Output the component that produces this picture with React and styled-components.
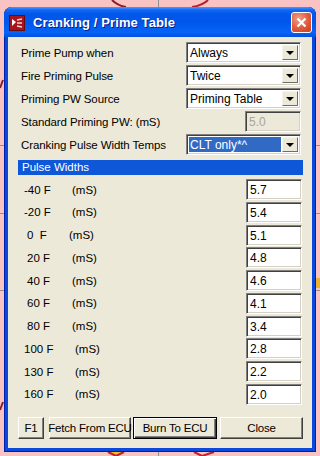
import React from 'react';
import styled, { createGlobalStyle } from 'styled-components';

const GlobalStyle = createGlobalStyle`
  html, body {
    margin: 0;
    padding: 0;
    background: #f9c3c3;
  }
  body {
    font-family: "Liberation Sans", Arial, sans-serif;
  }
`;

const Page = styled.div`
  position: relative;
  width: 320px;
  height: 456px;
  overflow: hidden;
  background: #f9c3c3;
`;

const Backdrop = styled.svg`
  position: absolute;
  left: 0;
  top: 0;
`;

const Window = styled.div`
  position: relative;
  margin: 7px 0 0 4px;
  width: 312px;
  padding-bottom: 4px;
  background: #0b48dc;
  border-radius: 8px 8px 0 0;
  box-shadow: inset 1px 0 #0020a8, inset -1px 0 #0020a8, inset 0 -1px #0020a8;
`;

const TitleBar = styled.div`
  height: 30px;
  display: flex;
  align-items: center;
  padding: 0 5px 0 5px;
  border-radius: 8px 8px 0 0;
  background: linear-gradient(#4b98ff 0, #1366f2 3px, #0058ea 7px, #0056ec 50%, #0663f6 85%, #0350e0 100%);
`;

const TitleIcon = styled.svg`
  flex: none;
  margin-top: 1px;
`;

const Title = styled.span`
  flex: 1;
  margin-left: 8px;
  color: #fff;
  font-weight: bold;
  font-size: 13px;
  letter-spacing: 0.1px;
  text-shadow: 1px 1px #0a1e8a;
`;

const CloseButton = styled.div`
  width: 19px;
  height: 19px;
  margin-right: -1px;
  margin-top: 1px;
  border: 1px solid #fff;
  border-radius: 3px;
  display: flex;
  align-items: center;
  justify-content: center;
  background: radial-gradient(circle at 35% 30%, #f0a088, #e2593a 55%, #c8401c);
`;

const Client = styled.div`
  margin: 0 4px;
  height: 411px;
  box-sizing: border-box;
  padding: 5px 9px 0 10px;
  background: #ece9d8;
  display: flex;
  flex-direction: column;
`;

const Settings = styled.div`
  display: flex;
  flex-direction: column;
  gap: 2px;
`;

const Row = styled.div`
  height: 21px;
  display: flex;
  align-items: center;
  justify-content: space-between;
`;

const Label = styled.span`
  padding-left: 3px;
  font-size: 11.5px;
  color: #000;
  letter-spacing: -0.1px;
`;

const Sunken = styled.div`
  box-sizing: border-box;
  height: ${p => p.$h || 21}px;
  border: 1px solid;
  border-color: #808080 #fff #fff #808080;
  box-shadow: inset 1px 1px #404040, inset -1px -1px #d4d0c8;
`;

const SelectBox = styled(Sunken)`
  width: 115px;
  margin-right: 2px;
  display: flex;
  background: #fff;
  padding: 2px;
`;

const SelectText = styled.div`
  flex: 1;
  display: flex;
  align-items: center;
  padding-left: 1px;
  font-size: 12px;
  color: ${p => (p.$focused ? '#fff' : '#000')};
  background: ${p => (p.$focused ? '#316ac5' : 'transparent')};
  margin-right: 1px;
`;

const DropButton = styled.div`
  width: 16px;
  box-sizing: border-box;
  background: #ece9d8;
  border: 1px solid;
  border-color: #f4f3ee #716f64 #716f64 #f4f3ee;
  display: flex;
  align-items: center;
  justify-content: center;
`;

const Arrow = styled.div`
  width: 0;
  height: 0;
  border-left: 4px solid transparent;
  border-right: 4px solid transparent;
  border-top: 4px solid #000;
`;

const NumberBox = styled(Sunken)`
  width: 56px;
  margin-right: ${p => (p.$disabled ? 2 : 1)}px;
  background: ${p => (p.$disabled ? '#ece9d8' : '#fff')};
  color: ${p => (p.$disabled ? '#a8a59a' : '#000')};
  font-size: 12px;
  padding: 3px 0 0 3px;
`;

const Header = styled.div`
  margin-top: 5px;
  height: 15px;
  background: #0d57d8;
  color: #fff;
  font-size: 11.5px;
  padding-left: 4px;
  line-height: 15px;
`;

const Table = styled.div`
  margin-top: 4px;
  display: flex;
  flex-direction: column;
  gap: 1.75px;
`;

const TableRow = styled.div`
  height: 21px;
  display: flex;
  align-items: center;
`;

const Temp = styled.span`
  flex: none;
  width: ${p => p.$w}px;
  padding-left: ${p => p.$indent}px;
  font-size: 11.5px;
  white-space: pre;
`;

const Unit = styled.span`
  flex: 1;
  font-size: 11.5px;
`;

const Buttons = styled.div`
  margin-top: 12px;
  display: flex;
`;

const Button = styled.div`
  box-sizing: border-box;
  width: ${p => p.$w}px;
  margin-left: ${p => p.$ml || 0}px;
  height: 22px;
  display: flex;
  align-items: center;
  justify-content: center;
  white-space: nowrap;
  font-size: 11.5px;
  letter-spacing: -0.2px;
  background: #ece9d8;
  border: 1px solid;
  border-color: ${p => (p.$default ? '#000' : '#fff #404040 #404040 #fff')};
  box-shadow: ${p =>
    p.$default
      ? 'inset 1px 1px #fff, inset -1px -1px #404040, inset -2px -2px #808080'
      : 'inset -1px -1px #808080'};
`;

const pulses = [
  { t: '-40 F', v: '5.7', indent: 6, w: 48 },
  { t: '-20 F', v: '5.4', indent: 6, w: 48 },
  { t: '0  F', v: '5.1', indent: 9, w: 42 },
  { t: '20 F', v: '4.8', indent: 9, w: 45 },
  { t: '40 F', v: '4.6', indent: 9, w: 45 },
  { t: '60 F', v: '4.1', indent: 9, w: 45 },
  { t: '80 F', v: '3.4', indent: 9, w: 45 },
  { t: '100 F', v: '2.8', indent: 6, w: 51 },
  { t: '130 F', v: '2.2', indent: 6, w: 51 },
  { t: '160 F', v: '2.0', indent: 6, w: 51 },
];

function Select({ value, focused }) {
  return (
    <SelectBox>
      <SelectText $focused={focused}>{value}</SelectText>
      <DropButton>
        <Arrow />
      </DropButton>
    </SelectBox>
  );
}

export default function App() {
  return (
    <Page>
      <GlobalStyle />
      <Backdrop width="320" height="456">
        <path d="M112 0 C116 4 120 6 126 7" stroke="#8a1a28" strokeWidth="2" fill="none" />
        <path d="M208 0 C204 4 199 6 192 7" stroke="#b02030" strokeWidth="2" fill="none" />
        <line x1="158.5" y1="0" x2="158.5" y2="8" stroke="#909090" />
        <line x1="158.5" y1="452" x2="158.5" y2="456" stroke="#909090" />
        <path d="M108 452 L116 456 L124 452" stroke="#c02030" strokeWidth="2" fill="#f4c020" />
        <path d="M194 452 L202 456 L214 452" stroke="#c02030" strokeWidth="2" fill="none" />
        <line x1="0" y1="145.5" x2="4" y2="145.5" stroke="#909090" />
        <line x1="0" y1="213.5" x2="4" y2="213.5" stroke="#909090" />
        <line x1="0" y1="290.5" x2="4" y2="290.5" stroke="#909090" />
        <line x1="316" y1="145.5" x2="320" y2="145.5" stroke="#909090" />
        <line x1="316" y1="213.5" x2="320" y2="213.5" stroke="#909090" />
        <rect x="316" y="278" width="4" height="10" fill="#f0b030" />
        <line x1="316" y1="290.5" x2="320" y2="290.5" stroke="#909090" />
        <path d="M0 88 L3 80" stroke="#8a1a28" strokeWidth="2" />
        <path d="M0 410 L3 402" stroke="#8a1a28" strokeWidth="2" />
      </Backdrop>
      <Window>
        <TitleBar>
          <TitleIcon width="16" height="16" viewBox="0 0 16 16">
            <rect x="0" y="0" width="16" height="16" fill="#a8141c" />
            <rect x="0.5" y="0.5" width="15" height="15" fill="none" stroke="#6a0a10" />
            <path d="M3 4 L7 7 L3 11 Z" fill="#fff" />
            <path d="M8 5 L13 4 M8 8 L13 8 M8 11 L13 12" stroke="#f8d0d0" strokeWidth="1.3" />
          </TitleIcon>
          <Title>Cranking / Prime Table</Title>
          <CloseButton>
            <svg width="11" height="11" viewBox="0 0 11 11">
              <path d="M1.5 1.5 L9.5 9.5 M9.5 1.5 L1.5 9.5" stroke="#fff" strokeWidth="2.2" />
            </svg>
          </CloseButton>
        </TitleBar>
        <Client>
          <Settings>
            <Row>
              <Label>Prime Pump when</Label>
              <Select value="Always" />
            </Row>
            <Row>
              <Label>Fire Priming Pulse</Label>
              <Select value="Twice" />
            </Row>
            <Row>
              <Label>Priming PW Source</Label>
              <Select value="Priming Table" />
            </Row>
            <Row>
              <Label>Standard Priming PW: (mS)</Label>
              <NumberBox $disabled>5.0</NumberBox>
            </Row>
            <Row>
              <Label>Cranking Pulse Width Temps</Label>
              <Select value="CLT only*^" focused />
            </Row>
          </Settings>
          <Header>Pulse Widths</Header>
          <Table>
            {pulses.map(p => (
              <TableRow key={p.t}>
                <Temp $indent={p.indent} $w={p.w}>{p.t}</Temp>
                <Unit>(mS)</Unit>
                <NumberBox>{p.v}</NumberBox>
              </TableRow>
            ))}
          </Table>
          <Buttons>
            <Button $w={26}>F1</Button>
            <Button $w={82} $ml={5}>Fetch From ECU</Button>
            <Button $w={84} $ml={2} $default>Burn To ECU</Button>
            <Button $w={83} $ml={3}>Close</Button>
          </Buttons>
        </Client>
      </Window>
    </Page>
  );
}
